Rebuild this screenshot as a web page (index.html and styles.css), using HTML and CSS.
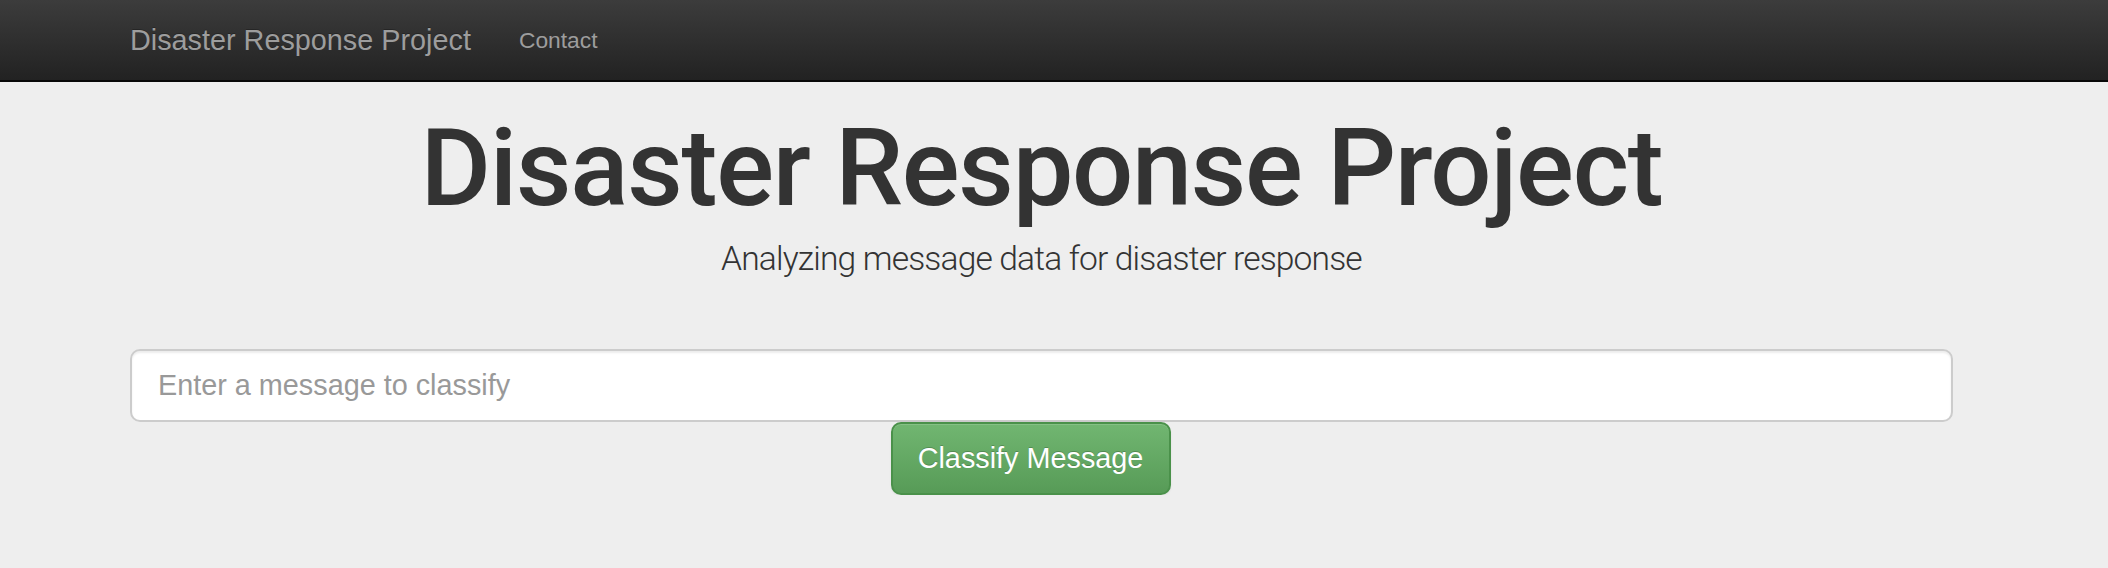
FILE: index.html
```html
<!DOCTYPE html>
<html>
<head>
<meta charset="utf-8">
<title>Disaster Response Project</title>
<link rel="stylesheet" href="styles.css">
</head>
<body>
<nav class="navbar">
  <div class="container nav-inner">
    <a class="brand" href="#">Disaster Response Project</a>
    <a class="nav-link" href="#">Contact</a>
  </div>
</nav>
<div class="jumbotron">
  <div class="container">
    <h1 class="title">Disaster Response Project</h1>
    <p class="lead">Analyzing message data for disaster response</p>
    <form class="form">
      <input class="msg-input" type="text" placeholder="Enter a message to classify">
      <div class="btn-row">
        <button class="btn-success" type="button">Classify Message</button>
      </div>
    </form>
  </div>
</div>
</body>
</html>
```
FILE: styles.css
```css
html, body {
  margin: 0;
  padding: 0;
}
body {
  background: #eeeeee;
  font-family: "Liberation Sans", Arial, sans-serif;
  color: #333;
}
.container {
  width: 1823px;
  margin-left: 130px;
}
.navbar {
  height: 80px;
  background: linear-gradient(to bottom, #3c3c3c 0%, #222222 100%);
  border-bottom: 2px solid #080808;
}
.nav-inner {
  display: flex;
  align-items: center;
  height: 80px;
}
.brand {
  font-size: 28.8px;
  color: #9d9d9d;
  text-decoration: none;
  margin-right: 48px;
  text-shadow: 0 -1px 0 rgba(0,0,0,0.25);
}
.nav-link {
  font-size: 22.8px;
  color: #9d9d9d;
  text-decoration: none;
}
.jumbotron {
  background: #eeeeee;
  padding-top: 27px;
}
.title {
  margin: 0;
  text-align: center;
  font-family: Roboto, "Liberation Sans", sans-serif;
  font-size: 108px;
  font-weight: 500;
  line-height: 1.1;
  color: #333;
  letter-spacing: -1.3px;
}
.lead {
  margin: 11px 0 0;
  text-align: center;
  font-family: Roboto, "Liberation Sans", sans-serif;
  font-weight: 300;
  font-size: 33.6px;
  letter-spacing: -0.85px;
  color: #333;
}
.form {
  margin-top: 71px;
}
.msg-input {
  display: block;
  box-sizing: border-box;
  width: 100%;
  height: 73px;
  padding: 0 26px;
  font-family: "Liberation Sans", Arial, sans-serif;
  font-size: 28.8px;
  border: 2px solid #cccccc;
  border-radius: 10px;
  background: #fff;
  color: #555;
  box-shadow: inset 0 2px 2px rgba(0,0,0,0.075);
}
.msg-input::placeholder {
  color: #999;
}
.btn-row {
  display: flex;
  justify-content: center;
  padding-right: 22px;
}
.btn-success {
  box-sizing: border-box;
  width: 280px;
  height: 73px;
  font-family: "Liberation Sans", Arial, sans-serif;
  font-size: 28.8px;
  color: #fff;
  background: linear-gradient(to bottom, #71b671 0%, #579b57 100%);
  border: 2px solid #4a914a;
  border-radius: 10px;
  text-shadow: 0 -1px 0 rgba(0,0,0,0.2);
  box-shadow: inset 0 1px 0 rgba(255,255,255,0.15), 0 1px 2px rgba(0,0,0,0.075);
  cursor: pointer;
}
```
